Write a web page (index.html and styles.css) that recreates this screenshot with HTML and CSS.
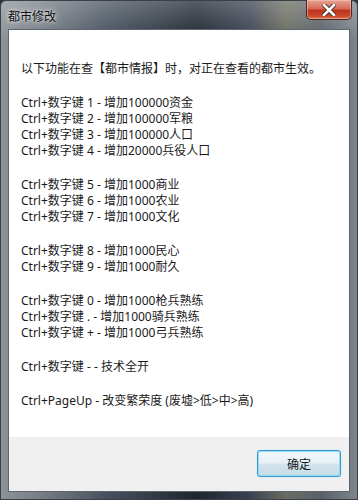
FILE: index.html
```html
<!DOCTYPE html>
<html lang="zh-CN">
<head>
    <meta charset="UTF-8">
    <meta name="viewport" content="width=device-width, initial-scale=1.0">
    <title>都市修改</title>
    <link rel="stylesheet" href="styles.css">
</head>
<body>
<div class="window">
    <div class="titlebar">
        <span class="title">都市修改</span>
        <button class="close-button" aria-label="关闭">
            <svg width="14" height="12" viewBox="0 0 14 12">
                <path d="M2 1 L12 11 M12 1 L2 11" stroke="#3a2a2a" stroke-width="4.4" stroke-linecap="square"/>
                <path d="M2 1 L12 11 M12 1 L2 11" stroke="#ffffff" stroke-width="2.6" stroke-linecap="square"/>
            </svg>
        </button>
    </div>
    <div class="client">
        <div class="content">
            <div class="group">以下功能在查【都市情报】时，对正在查看的都市生效。</div>
            <div class="group">
                <div>Ctrl+数字键 1 - 增加100000资金</div>
                <div>Ctrl+数字键 2 - 增加100000军粮</div>
                <div>Ctrl+数字键 3 - 增加100000人口</div>
                <div>Ctrl+数字键 4 - 增加20000兵役人口</div>
            </div>
            <div class="group">
                <div>Ctrl+数字键 5 - 增加1000商业</div>
                <div>Ctrl+数字键 6 - 增加1000农业</div>
                <div>Ctrl+数字键 7 - 增加1000文化</div>
            </div>
            <div class="group">
                <div>Ctrl+数字键 8 - 增加1000民心</div>
                <div>Ctrl+数字键 9 - 增加1000耐久</div>
            </div>
            <div class="group">
                <div>Ctrl+数字键 0 - 增加1000枪兵熟练</div>
                <div>Ctrl+数字键 . - 增加1000骑兵熟练</div>
                <div>Ctrl+数字键 + - 增加1000弓兵熟练</div>
            </div>
            <div class="group">Ctrl+数字键 - - 技术全开</div>
            <div class="group">Ctrl+PageUp - 改变繁荣度 (废墟&gt;低&gt;中&gt;高)</div>
        </div>
        <div class="footer">
            <button class="ok-button">确定</button>
        </div>
    </div>
</div>
</body>
</html>
```

FILE: styles.css
```css
body {
    margin: 0;
    background: #2a323c;
    font-family: "Noto Sans", "Noto Sans CJK SC", sans-serif;
}
.window {
    width: 358px;
    height: 500px;
    box-sizing: border-box;
    display: flex;
    flex-direction: column;
    border-radius: 6px 6px 0 0;
    border: 1px solid #3a4048;
    background:
        linear-gradient(180deg, rgba(255,255,255,0.25) 0, rgba(255,255,255,0) 40px),
        linear-gradient(90deg, #8c9298 0, #7a8088 10%, #46505c 30%, #1e2630 55%, #3a4250 70%, #6a6c60 80%, #5a606a 90%, #7c848c 100%);
}
.titlebar {
    height: 28px;
    display: flex;
    align-items: flex-start;
    justify-content: space-between;
    padding-left: 7px;
}
.title {
    margin-top: 7px;
    font-size: 12px;
    line-height: 16px;
    color: #101010;
    text-shadow: 0 0 6px rgba(255,255,255,0.8), 0 0 3px rgba(255,255,255,0.7);
    font-family: "Noto Sans CJK SC", sans-serif;
}
.close-button {
    width: 46px;
    height: 20px;
    margin: -1px 5px 0 0;
    padding: 0;
    border: 1px solid #4a2a24;
    border-top: none;
    border-radius: 0 0 5px 5px;
    background: linear-gradient(180deg, #e6a496 0, #d66a56 45%, #c0321c 55%, #c8482e 85%, #e07a50 100%);
    box-shadow: inset 0 0 0 1px rgba(255,210,200,0.45);
    display: flex;
    align-items: center;
    justify-content: center;
}
.client {
    flex: 1;
    margin: 0 7px 7px 7px;
    border: 1px solid #5c6670;
    display: flex;
    flex-direction: column;
    background: #ffffff;
}
.content {
    flex: 1;
    padding: 31px 0 0 12px;
    font-size: 12px;
    line-height: 16px;
    color: #1a1a1a;
}
.group + .group {
    margin-top: 18px;
}
.footer {
    height: 54px;
    box-sizing: border-box;
    background: #f0f0f0;
    display: flex;
    justify-content: flex-end;
    padding: 13px 8px 0 0;
}
.ok-button {
    width: 84px;
    height: 27px;
    border: 1px solid #3c9bd0;
    border-radius: 3px;
    background: linear-gradient(180deg, #f2f8fb 0, #e6f0f6 48%, #d4e4ee 52%, #c8dbe6 100%);
    box-shadow: inset 0 0 0 1px #8fdcf8, 0 0 1px #5ab8e4;
    font-family: "Noto Sans CJK SC", sans-serif;
    font-size: 12px;
    color: #1a1a1a;
    padding: 0;
}
```
